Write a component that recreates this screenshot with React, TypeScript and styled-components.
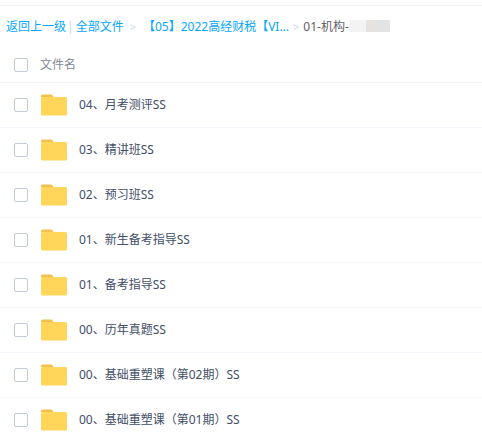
import React, { FC } from 'react'
import styled, { createGlobalStyle } from 'styled-components'

const GlobalStyle = createGlobalStyle`
  html, body {
    margin: 0;
    padding: 0;
    background: #fff;
    overflow: hidden;
  }
  body {
    font-family: "Noto Sans", "Noto Sans CJK SC", sans-serif;
    font-size: 12px;
    color: #424e67;
  }
`

const Page = styled.div`
  width: 482px;
  height: 437px;
  overflow: hidden;
`

const Breadcrumb = styled.div`
  height: 42px;
  margin-top: 5px;
  padding: 0 0 0 6px;
  border-top: 1px solid #f2f2f2;
  display: flex;
  align-items: center;
  box-sizing: border-box;
  white-space: nowrap;
  line-height: 16px;
`

const CrumbLink = styled.a`
  color: #06a7ff;
`

const Divider = styled.span`
  color: #c4d8f4;
  margin: 0 2px 0 1px;
`

const Arrow = styled.span<{ $wide?: boolean }>`
  color: #c4d8f4;
  margin: 0 ${props => (props.$wide ? 7 : 4)}px 0 ${props => (props.$wide ? 6 : 4)}px;
  font-size: 11px;
`

const Current = styled.span`
  color: #5f6168;
`

const Redacted = styled.span`
  display: inline-flex;
  height: 12px;
  width: 41px;
  margin-bottom: 2px;
  background: linear-gradient(90deg, #f3f3f3 0 16px, #f6f6f6 16px 17px, #e5e2df 17px 29px, #e2e3e4 29px 41px);
`

const HeaderRow = styled.div`
  height: 35px;
  display: flex;
  align-items: center;
  padding-left: 14px;
  border-bottom: 1px solid #f4f4f4;
  color: #818999;
`

const FileRow = styled.div`
  height: 44px;
  display: flex;
  align-items: center;
  padding-left: 14px;
  border-bottom: 1px solid #f4f7fb;
`

const Check = styled.span`
  width: 12px;
  height: 12px;
  border: 1px solid #c2cbd8;
  border-radius: 2px;
  background: #fff;
  flex: none;
`

const HeaderLabel = styled.span`
  margin-left: 12px;
  padding-bottom: 2px;
`

const FolderWrap = styled.svg`
  width: 26px;
  height: 22px;
  margin-left: 13px;
  flex: none;
`

const FileName = styled.span`
  margin-left: 12px;
  padding-bottom: 2px;
  color: #424e67;
`

const Folder: FC = () => (
  <FolderWrap viewBox="0 0 26 22">
    <path d="M0 2a1.5 1.5 0 0 1 1.5-1.5h8.5a1.5 1.5 0 0 1 1.2.6L12.5 3H0z" fill="#f2c04f" />
    <rect x="0" y="3" width="26" height="18.5" rx="1.5" fill="#ffd659" />
  </FolderWrap>
)

const names = [
  '04、月考测评SS',
  '03、精讲班SS',
  '02、预习班SS',
  '01、新生备考指导SS',
  '01、备考指导SS',
  '00、历年真题SS',
  '00、基础重塑课（第02期）SS',
  '00、基础重塑课（第01期）SS',
]

const App: FC = () => (
  <Page>
    <GlobalStyle />
    <Breadcrumb>
      <CrumbLink>返回上一级</CrumbLink>
      <Divider>|</Divider>
      <CrumbLink>全部文件</CrumbLink>
      <Arrow $wide>&gt;</Arrow>
      <CrumbLink>【05】2022高经财税【VI...</CrumbLink>
      <Arrow>&gt;</Arrow>
      <Current>01-机构-</Current>
      <Redacted />
    </Breadcrumb>
    <HeaderRow>
      <Check />
      <HeaderLabel>文件名</HeaderLabel>
    </HeaderRow>
    {names.map(name => (
      <FileRow key={name}>
        <Check />
        <Folder />
        <FileName>{name}</FileName>
      </FileRow>
    ))}
  </Page>
)

export default App
